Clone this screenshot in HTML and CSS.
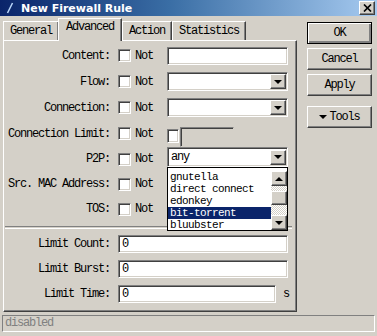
FILE: index.html
```html
<!DOCTYPE html>
<html lang="en">
<head>
  <meta charset="UTF-8" />
  <title>New Firewall Rule</title>
  <link rel="stylesheet" href="styles.css">
</head>
<body>
  <div class="window">
    <div class="titlebar">
      <svg class="title-icon" width="8" height="12" viewBox="0 0 8 12"><line x1="6.5" y1="1" x2="1.5" y2="11" stroke="#b8d4f8" stroke-width="1.6"/></svg>
      <span class="title">New Firewall Rule</span>
      <span class="close-btn">
        <svg width="9" height="8" viewBox="0 0 9 8"><path d="M1 0.5 L8 7.5 M8 0.5 L1 7.5" stroke="#000" stroke-width="1.7"/></svg>
      </span>
    </div>

    <div class="main">
      <div class="left">
        <div class="tabs">
          <div class="tab">General</div>
          <div class="tab active">Advanced</div>
          <div class="tab">Action</div>
          <div class="tab">Statistics</div>
        </div>

        <div class="panel">
          <div class="row">
            <span class="label">Content:</span>
            <span class="check"></span><span class="not">Not</span>
            <span class="field"></span>
          </div>
          <div class="row">
            <span class="label">Flow:</span>
            <span class="check"></span><span class="not">Not</span>
            <span class="field select"><span class="drop-btn"><span class="arrow"></span></span></span>
          </div>
          <div class="row">
            <span class="label">Connection:</span>
            <span class="check"></span><span class="not">Not</span>
            <span class="field select"><span class="drop-btn"><span class="arrow"></span></span></span>
          </div>
          <div class="row">
            <span class="label">Connection Limit:</span>
            <span class="check"></span><span class="not">Not</span>
            <span class="check small"></span>
            <span class="field disabled"></span>
          </div>
          <div class="row h25">
            <span class="label">P2P:</span>
            <span class="check"></span><span class="not">Not</span>
            <span class="field select open">
              <span class="value">any</span>
              <span class="drop-btn"><span class="arrow"></span></span>
              <span class="list">
                <span class="items">
                  <span class="item">gnutella</span>
                  <span class="item">direct connect</span>
                  <span class="item">edonkey</span>
                  <span class="item selected">bit-torrent</span>
                  <span class="item">bluubster</span>
                </span>
                <span class="scrollbar">
                  <span class="sb-btn"><span class="arrow up"></span></span>
                  <span class="track"><span class="thumb"></span></span>
                  <span class="sb-btn"><span class="arrow"></span></span>
                </span>
              </span>
            </span>
          </div>
          <div class="row h25">
            <span class="label">Src. MAC Address:</span>
            <span class="check"></span><span class="not">Not</span>
          </div>
          <div class="row h25">
            <span class="label">TOS:</span>
            <span class="check"></span><span class="not">Not</span>
          </div>

          <div class="divider"></div>

          <div class="row h25">
            <span class="label">Limit Count:</span>
            <span class="field wide"><span class="value">0</span></span>
          </div>
          <div class="row h25">
            <span class="label">Limit Burst:</span>
            <span class="field wide"><span class="value">0</span></span>
          </div>
          <div class="row h25">
            <span class="label">Limit Time:</span>
            <span class="field time"><span class="value">0</span></span>
            <span class="unit">s</span>
          </div>
        </div>
      </div>

      <div class="buttons">
        <div class="btn default">OK</div>
        <div class="btn">Cancel</div>
        <div class="btn">Apply</div>
        <div class="btn tools"><span class="arrow"></span>Tools</div>
      </div>
    </div>

    <div class="status">disabled</div>
  </div>
</body>
</html>
```

FILE: styles.css
```css
body {
  margin: 0;
  background: #d4d0c8;
  font-family: 'Liberation Mono', 'DejaVu Sans Mono', monospace;
  font-size: 12px;
  letter-spacing: -1.2px;
  color: #000;
}

.window {
  width: 377px;
  height: 336px;
  background: #d4d0c8;
  overflow: hidden;
}

/* title bar */
.titlebar {
  height: 16px;
  display: flex;
  align-items: center;
  padding: 0 2px 0 6px;
  background: linear-gradient(90deg, #0a246a 0%, #3a6ea5 45%, #a6caf0 100%);
}

.title-icon {
  margin-right: 7px;
}

.title {
  font-family: 'DejaVu Sans', 'Liberation Sans', sans-serif;
  font-weight: 700;
  font-size: 11px;
  letter-spacing: 0;
  color: #fff;
  flex: 1;
}

.close-btn {
  width: 14px;
  height: 12px;
  display: flex;
  align-items: center;
  justify-content: center;
  background: #d4d0c8;
  border: 1px solid;
  border-color: #fff #404040 #404040 #fff;
  box-shadow: inset -1px -1px #808080;
}

/* layout */
.main {
  display: flex;
  height: 296px;
}

.left {
  margin-left: 3px;
  width: 294px;
  display: flex;
  flex-direction: column;
}

/* tabs */
.tabs {
  height: 24px;
  display: flex;
  align-items: flex-end;
}

.tab {
  height: 18px;
  line-height: 19px;
  padding: 0 6px;
  border: 1px solid;
  border-bottom: none;
  border-color: #fff #404040 #404040 #fff;
  box-shadow: inset -1px 0 #808080;
}

.tab.active {
  height: 22px;
  line-height: 17px;
  margin-bottom: -1px;
  padding: 0 7px;
  background: #d4d0c8;
  position: relative;
}

.tab + .tab.active {
  margin-left: -1px;
}

/* panel */
.panel {
  height: 270px;
  padding-top: 2px;
  border: 1px solid;
  border-color: #fff #404040 #404040 #fff;
  box-shadow: inset -1px -1px #808080;
}

.row {
  height: 26px;
  display: flex;
  align-items: center;
}

.row.h25 {
  height: 25px;
}

.label {
  width: 106px;
  text-align: right;
  white-space: pre;
}

.check {
  width: 11px;
  height: 11px;
  margin-left: 8px;
  background: #fff;
  border: 1px solid;
  border-color: #808080 #fff #fff #808080;
  box-shadow: inset 1px 1px #404040, inset -1px -1px #d4d0c8;
}

.check.small {
  margin-left: 14px;
  width: 10px;
  height: 12px;
  margin-top: 4px;
}

.not {
  margin-left: 4px;
}

.field {
  position: relative;
  margin-left: 14px;
  width: 119px;
  height: 16px;
  display: flex;
  align-items: center;
  background: #fff;
  border: 1px solid;
  border-color: #808080 #fff #fff #808080;
  box-shadow: inset 1px 1px #404040, inset -1px -1px #d4d0c8;
}

.field.select {
  height: 17px;
  justify-content: flex-end;
}

.field.open {
  height: 18px;
  margin-top: -4px;
}

.field.disabled {
  margin-left: 1px;
  width: 52px;
  height: 18px;
  margin-top: 6px;
  background: #d4d0c8;
  border-right-color: #d4d0c8;
  border-bottom-color: #d4d0c8;
  box-shadow: inset 1px 1px #404040;
}

.field.wide {
  margin-left: 8px;
  width: 168px;
}

.field.time {
  margin-left: 8px;
  width: 156px;
}

.value {
  flex: 1;
  padding-left: 3px;
}

.unit {
  margin-left: 7px;
}

.drop-btn {
  width: 14px;
  height: 13px;
  margin-right: 1px;
  display: flex;
  align-items: center;
  justify-content: center;
  background: #d4d0c8;
  border: 1px solid;
  border-color: #fff #404040 #404040 #fff;
  box-shadow: inset -1px -1px #808080;
}

.arrow {
  width: 0;
  height: 0;
  border-left: 4px solid transparent;
  border-right: 4px solid transparent;
  border-top: 4px solid #000;
}

.arrow.up {
  border-top: none;
  border-bottom: 4px solid #000;
}

/* dropdown list */
.list {
  position: absolute;
  top: 19px;
  left: -1px;
  width: 119px;
  height: 62px;
  display: flex;
  background: #fff;
  border: 1px solid #000;
  overflow: hidden;
  z-index: 2;
}

.items {
  flex: 1;
  display: flex;
  flex-direction: column;
  padding-top: 3px;
}

.item {
  flex: none;
  height: 12px;
  line-height: 12px;
  padding-left: 2px;
  font-size: 11px;
  letter-spacing: -0.6px;
  white-space: pre;
}

.item.selected {
  background: #0a246a;
  color: #fff;
}

.scrollbar {
  width: 16px;
  margin-top: 3px;
  display: flex;
  flex-direction: column;
}

.sb-btn {
  height: 13px;
  display: flex;
  align-items: center;
  justify-content: center;
  background: #d4d0c8;
  border: 1px solid;
  border-color: #fff #404040 #404040 #fff;
  box-shadow: inset -1px -1px #808080;
}

.track {
  flex: 1;
  padding-top: 5px;
  background: repeating-conic-gradient(#d4d0c8 0 25%, #fff 0 50%) 0 0 / 2px 2px;
}

.thumb {
  display: block;
  height: 12px;
  background: #d4d0c8;
  border: 1px solid;
  border-color: #fff #404040 #404040 #fff;
  box-shadow: inset -1px -1px #808080;
}

.divider {
  margin: 4px 4px 3px 1px;
  height: 1px;
  border-top: 1px solid #808080;
  border-bottom: 1px solid #fff;
}

/* right buttons */
.buttons {
  margin-left: 10px;
  padding-top: 6px;
  display: flex;
  flex-direction: column;
  gap: 4px;
}

.btn {
  width: 63px;
  height: 20px;
  line-height: 20px;
  text-align: center;
  border: 1px solid;
  border-color: #fff #404040 #404040 #fff;
  box-shadow: inset -1px -1px #808080;
}

.btn.default {
  border-color: #000;
  box-shadow: inset 1px 1px #fff, inset -2px -2px #808080;
}

.btn.tools {
  margin-top: 6px;
  display: flex;
  align-items: center;
  justify-content: center;
  gap: 2px;
}

/* status bar */
.status {
  margin: 3px 2px 0 2px;
  height: 15px;
  line-height: 15px;
  padding-left: 2px;
  color: #808080;
  border: 1px solid;
  border-color: #808080 #fff #fff #808080;
}
```
